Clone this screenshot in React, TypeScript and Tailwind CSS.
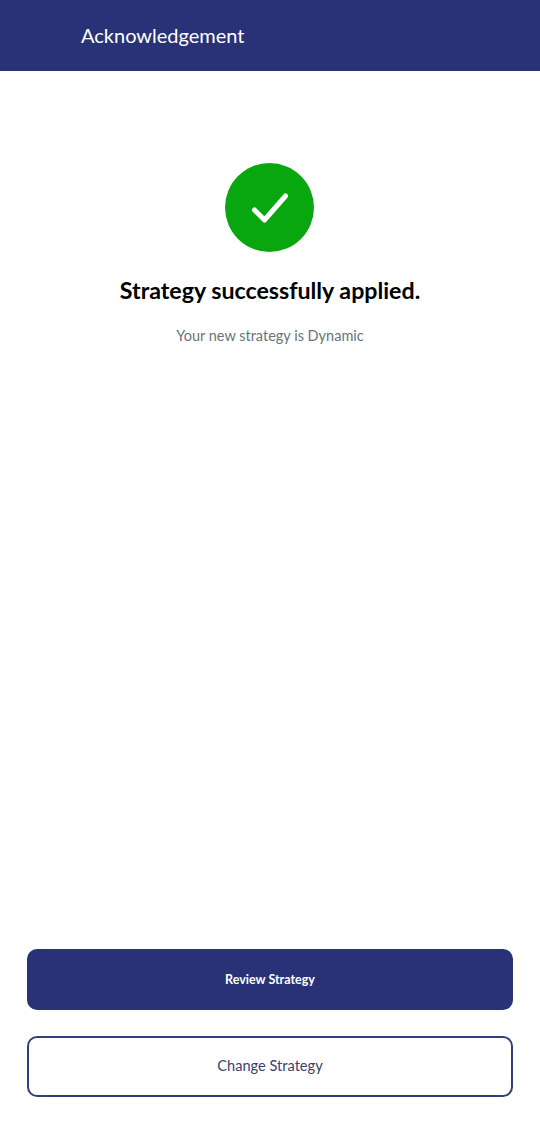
import React from 'react';

export default function App() {
  return (
    <div className="w-[540px] h-[1125px] bg-white flex flex-col font-['Lato',sans-serif]">
      {/* Header */}
      <div className="h-[71px] bg-[#2a3277] flex items-center pl-[81px] shrink-0">
        <span className="text-white text-[20px] mb-[1px]">Acknowledgement</span>
      </div>

      {/* Body */}
      <div className="flex-1 flex flex-col items-center pt-[92px]">
        <div className="w-[89px] h-[89px] mr-[1px] rounded-full bg-[#09a70f] flex items-center justify-center">
          <svg width="40" height="34" viewBox="0 0 40 34" fill="none">
            <path d="M4.5 19 L14.5 29 L35.5 5" stroke="white" strokeWidth="5" strokeLinecap="round" strokeLinejoin="round" />
          </svg>
        </div>
        <h1 className="mt-[20px] text-[23.2px] leading-[36px] font-bold text-black">Strategy successfully applied.</h1>
        <p className="mt-[18px] text-[14.5px] leading-[20px] text-[#69737d]">Your new strategy is Dynamic</p>
      </div>

      {/* Buttons */}
      <div className="flex flex-col gap-[26px] px-[27px] pb-[28px]">
        <button className="h-[61px] pt-[1px] rounded-[10px] bg-[#2a3277] text-white text-[12.5px] font-bold">Review Strategy</button>
        <button className="h-[61px] pb-[1px] rounded-[10px] border-2 border-[#363d7f] bg-white text-[#3a4070] text-[14.6px]">Change Strategy</button>
      </div>
    </div>
  );
}
